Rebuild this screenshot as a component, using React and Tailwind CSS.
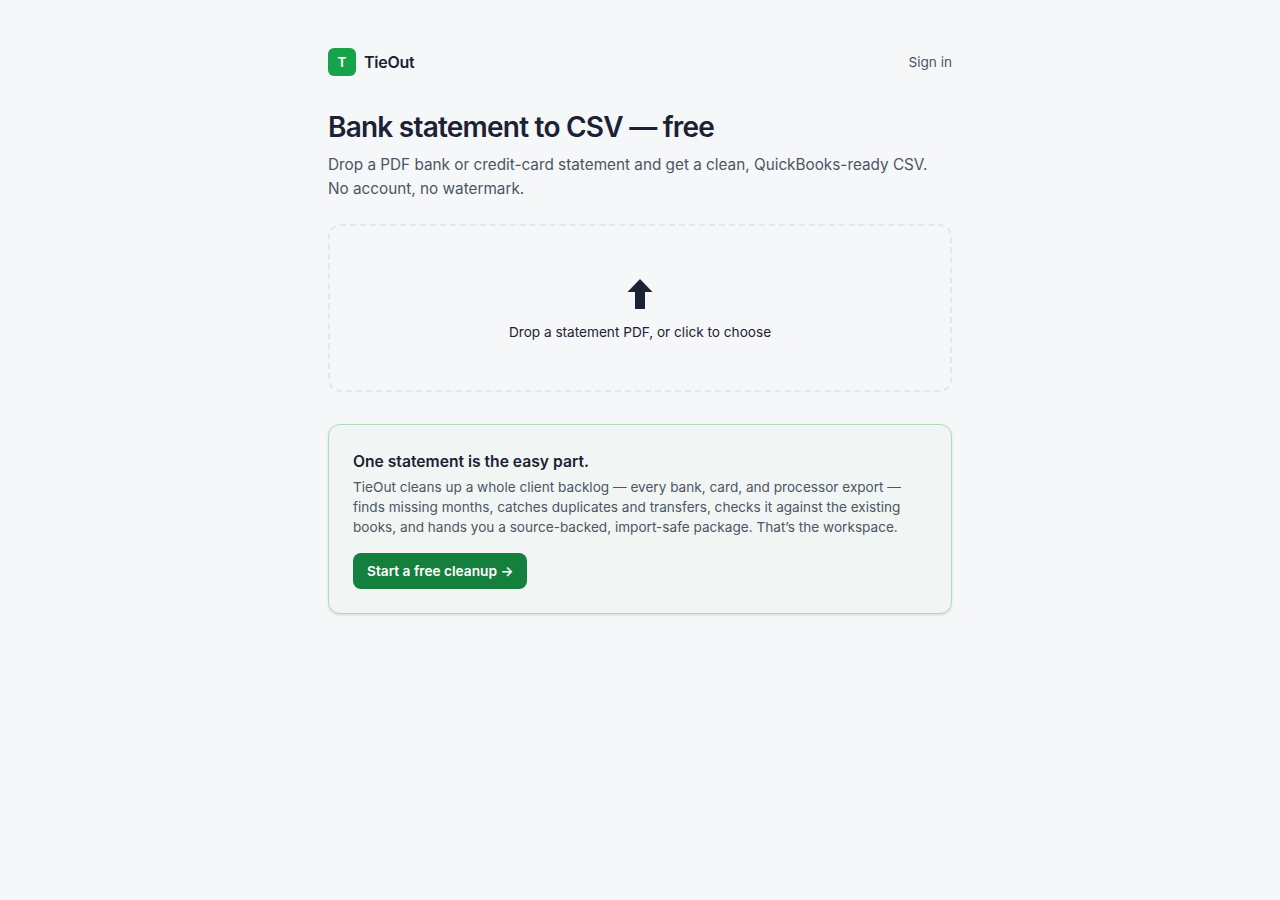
export default function App() {
  return (
    <div className="min-h-[900px] bg-[#f6f7f9] text-[#1a2233] font-['Inter',sans-serif]">
      <div className="mx-auto w-[624px] pt-12">
        <header className="flex items-center justify-between">
          <div className="flex items-center gap-2">
            <div className="flex h-7 w-7 items-center justify-center rounded-md bg-[#16a34a] text-[13.5px] font-semibold text-white">T</div>
            <span className="text-base font-semibold tracking-[-0.25px]">TieOut</span>
          </div>
          <a className="text-[13.6px] text-[#4b5563]">Sign in</a>
        </header>
        <h1 className="mt-8 text-[28px] leading-[38px] font-semibold tracking-[-0.77px]">Bank statement to CSV — free</h1>
        <p className="mt-[7px] text-[15.3px] leading-6 text-[#4b5563]">Drop a PDF bank or credit-card statement and get a clean, QuickBooks-ready CSV. No account, no watermark.</p>
        <div className="mt-[23px] flex h-[168px] flex-col items-center justify-center rounded-xl border-2 border-dashed border-[#e5e7eb]">
          <svg className="mt-[5px]" width="26" height="30" viewBox="0 0 26 30" fill="#1a2233">
            <path d="M13 0 L25.5 13 L18 13 L18 30 L8 30 L8 13 L0.5 13 Z" />
          </svg>
          <div className="mt-[13px] text-[13.62px] leading-5 text-[#1a2233]">Drop a statement PDF, or click to choose</div>
        </div>
        <section className="mt-8 rounded-xl border border-[#a7dfbc] bg-[#f1f6f4] p-6 shadow-sm">
          <h2 className="pt-px text-[15.65px] leading-6 font-semibold">One statement is the easy part.</h2>
          <p className="mt-[3px] text-[13.6px] leading-5 text-[#4b5563]">TieOut cleans up a whole client backlog — every bank, card, and processor export — finds missing months, catches duplicates and transfers, checks it against the existing books, and hands you a source-backed, import-safe package. That’s the workspace.</p>
          <button className="mt-4 flex h-9 items-center rounded-lg bg-[#15803d] px-[14px] text-[13.7px] font-semibold text-white">Start a free cleanup →</button>
        </section>
      </div>
    </div>
  );
}
